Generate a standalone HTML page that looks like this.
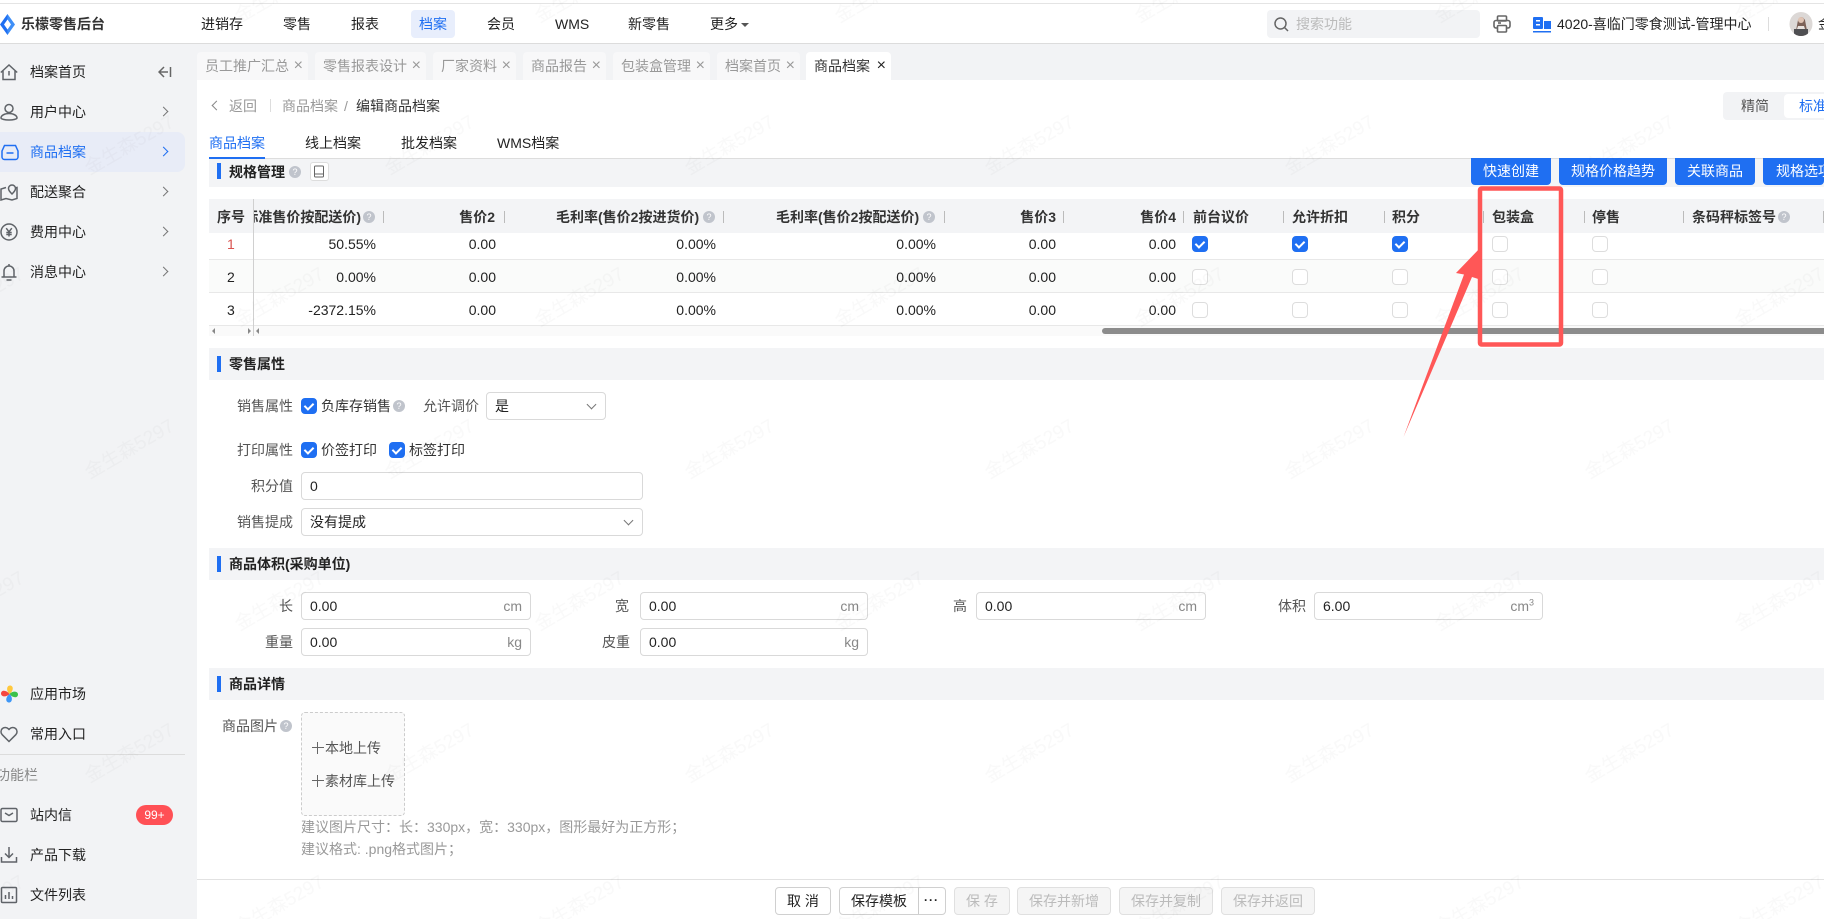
<!DOCTYPE html>
<html lang="zh"><head><meta charset="utf-8"><title>乐檬零售后台</title>
<style>
html,body{margin:0;padding:0;background:#fff}
#p{position:relative;width:1824px;height:919px;overflow:hidden;background:#fff;font:14px/20px "Liberation Sans","Noto Sans CJK SC",sans-serif;color:#222}
#p div,#p span.a,#p svg.a{position:absolute}
.t{white-space:nowrap}
.g{color:#555}.l{color:#999}.b{font-weight:bold}
.tab{top:52px;height:28px;background:#f8f8f9;border-radius:4px 4px 0 0;color:#999;line-height:28px;text-indent:8px;white-space:nowrap}
.x{position:absolute;right:5px;top:0;text-indent:0;font-size:16px}
.sec{left:209px;width:1615px;height:32px;background:#f3f4f6}
.bar{left:217px;width:4px;height:16px;background:#1f6ff2}
.sep{width:1px;height:12px;top:211px;background:#bbb}
.cb{width:14px;height:14px;border:1px solid #ddd;border-radius:4px;background:#fff}
.cb.on{background:#1f6ff2;border-color:#1f6ff2}
.cb.on::after{content:"";position:absolute;left:4px;top:2px;width:4px;height:7px;border:solid #fff;border-width:0 2px 2px 0;transform:rotate(45deg)}
.q{width:12px;height:12px;border-radius:50%;background:#c0c4cc;color:#fff;font-size:9px;line-height:12px;text-align:center}
.btn{top:158px;height:27px;background:#1f6ff2;color:#fff;text-align:center;line-height:26px;border-radius:0 0 4px 4px}
.in{height:26px;border:1px solid #d9d9d9;border-radius:4px;background:#fff;line-height:26px;text-indent:8px;white-space:nowrap}
.u{position:absolute;right:8px;top:0;color:#888;text-indent:0}
.f{top:887px;height:26px;line-height:26px;border:1px solid #d0d0d0;border-radius:4px;text-align:center;background:#fff;white-space:nowrap}
.d{background:#f5f5f5;border-color:#e0e0e0;color:#bbb}
.chev{width:6px;height:6px;border:solid #777;border-width:1.5px 1.5px 0 0;transform:rotate(45deg)}
.sv{width:18px;height:18px;fill:none;stroke:#5f6368;stroke-width:1.5}
.plus{position:relative;display:inline-block;width:12px;height:12px;margin-right:1px;vertical-align:-1px;background:linear-gradient(#666,#666) center/12px 1.2px no-repeat,linear-gradient(#666,#666) center/1.2px 12px no-repeat}
</style></head><body><div id="p">

<!-- top header -->
<div style="left:0;top:3px;width:1824px;height:1px;background:#e4e4e4"></div>
<div style="left:0;top:43px;width:1824px;height:1px;background:#dcdcdc"></div>
<svg class="a" style="left:0;top:14px" width="15" height="21" viewBox="0 0 15 21"><path d="M7.500 0L0 10.500 7.500 21V15.500L4 10.500 7.500 5.500z" fill="#1f6ff2"/><path d="M7.500 0L15 10.500 7.500 21V15.500L11 10.500 7.500 5.500z" fill="#3f8ff7"/></svg>
<div class="t b" style="left:21px;top:14px;color:#333">乐檬零售后台</div>
<div style="left:411px;top:10px;width:44px;height:28px;background:#e8eefc;border-radius:4px"></div>
<div class="t" style="left:201px;top:14px">进销存</div>
<div class="t" style="left:283px;top:14px">零售</div>
<div class="t" style="left:351px;top:14px">报表</div>
<div class="t" style="left:419px;top:14px;color:#1f6ff2">档案</div>
<div class="t" style="left:487px;top:14px">会员</div>
<div class="t" style="left:555px;top:14px">WMS</div>
<div class="t" style="left:628px;top:14px">新零售</div>
<div class="t" style="left:710px;top:14px">更多</div>
<div style="left:741px;top:23px;width:0;height:0;border:4px solid transparent;border-top:4px solid #555;border-bottom:0"></div>

<div style="left:1267px;top:10px;width:213px;height:28px;background:#f2f3f5;border-radius:4px"></div>
<svg class="a" style="left:1274px;top:17px" width="15" height="15" viewBox="0 0 15 15" fill="none" stroke="#666" stroke-width="1.5"><circle cx="6.500" cy="6.500" r="5.500"/><path d="M10.500 10.500l3.500 3.500"/></svg>
<div class="t" style="left:1296px;top:14px;color:#bbb">搜索功能</div>
<svg class="a" style="left:1493px;top:15px" width="18" height="18" viewBox="0 0 18 18" fill="none" stroke="#666" stroke-width="1.600"><rect x="4.500" y="1" width="9" height="5" rx="1"/><rect x="1" y="5.500" width="16" height="7.500" rx="2"/><rect x="4.500" y="10.500" width="9" height="6.500" rx="1" fill="#fff"/><path d="M5 8h3"/></svg>
<svg class="a" style="left:1533px;top:17px" width="18" height="16" viewBox="0 0 18 16"><rect x="0" y="0" width="10" height="12" rx="1" fill="#1f6ff2"/><rect x="11" y="4" width="7" height="8" fill="#1f6ff2"/><rect x="0" y="14" width="18" height="1.500" fill="#1f6ff2"/><rect x="3" y="3" width="4" height="1.500" fill="#fff"/><rect x="3" y="7" width="4" height="1.500" fill="#fff"/></svg>
<div class="t" style="left:1557px;top:14px">4020-喜临门零食测试-管理中心</div>
<div style="left:1768px;top:17px;width:1px;height:14px;background:#ddd"></div>
<svg class="a" style="left:1789px;top:12px" width="24" height="24" viewBox="0 0 24 24"><defs><clipPath id="av"><ellipse cx="12" cy="12" rx="11.500" ry="12"/></clipPath></defs><g clip-path="url(#av)"><rect width="24" height="24" fill="#dcd8d6"/><path d="M6 24L9 8q3-6 7 0l3 16z" fill="#7d6258"/><circle cx="12" cy="8" r="3" fill="#e0c4b4"/><rect x="5" y="17" width="14" height="7" fill="#4f4f52"/><path d="M9 14h6l1 3H8z" fill="#e8e2de"/></g></svg>
<div class="t" style="left:1818px;top:14px">金</div>

<!-- sidebar -->
<div style="left:0;top:44px;width:197px;height:875px;background:#f2f3f5"></div>
<div style="left:197px;top:44px;width:1627px;height:36px;background:#f2f3f5"></div>
<div style="left:0;top:132px;width:185px;height:40px;background:#e8ecf7;border-radius:0 8px 8px 0"></div>

<svg class="a sv" style="left:0;top:63px" viewBox="0 0 18 18"><path d="M.8 9.500L9 2l8.200 7.500M3 8v8.500h12V8M9 8v4.500"/></svg>
<div class="t" style="left:30px;top:62px">档案首页</div>
<svg class="a" style="left:158px;top:66px" width="14" height="12" viewBox="0 0 14 12" fill="none" stroke="#666" stroke-width="1.500"><path d="M6 1L1 6l5 5M1 6h9M12.500 1v10"/></svg>

<svg class="a sv" style="left:0;top:103px" viewBox="0 0 18 18"><circle cx="9" cy="5.500" r="4"/><path d="M1 15c0-2.500 3.500-4.500 8-4.500s8 2 8 4.500c0 1-3.500 2-8 2s-8-1-8-2z"/></svg>
<div class="t" style="left:30px;top:102px">用户中心</div>

<svg class="a sv" style="left:1px;top:143px;stroke:#1f6ff2" viewBox="0 0 18 18"><path d="M3.500 2.500h11L17 8v6a2.500 2.500 0 0 1-2.500 2.500h-11A2.500 2.500 0 0 1 1 14V8z"/><path d="M5.500 10h7"/></svg>
<div class="t" style="left:30px;top:142px;color:#1f6ff2">商品档案</div>

<svg class="a sv" style="left:0;top:183px" viewBox="0 0 18 18"><path d="M6 4.500L1 6v11l5-1.500 6 1.500 5-1.500V4.500l-2 .5"/><path d="M12 11c-2-2-3.500-3.500-3.500-5.500a3.500 3.500 0 0 1 7 0c0 2-1.500 3.500-3.500 5.500z"/></svg>
<div class="t" style="left:30px;top:182px">配送聚合</div>

<svg class="a sv" style="left:0;top:223px" viewBox="0 0 18 18"><circle cx="9" cy="9" r="8"/><path d="M6.200 5.200L9 8.800l2.800-3.600M9 8.800V13.500M6.300 9.500h5.400M6.300 11.500h5.400"/></svg>
<div class="t" style="left:30px;top:222px">费用中心</div>

<svg class="a sv" style="left:0;top:263px" viewBox="0 0 18 18"><path d="M4 13.500V8a5 5 0 0 1 10 0v5.500M1.500 14h15M6.500 17h5M9 1v2"/></svg>
<div class="t" style="left:30px;top:262px">消息中心</div>

<svg class="a" style="left:1px;top:685px" width="17" height="18" viewBox="0 0 17 18"><g id="pw"><path d="M8.500 9C5 6 5.500.5 9 .5S13 5.500 8.500 9z" fill="#ffc83d"/><path d="M8.500 9C5 6 5.500.5 9 .5S13 5.500 8.500 9z" fill="#3cc24a" transform="rotate(90 8.500 9)"/><path d="M8.500 9C5 6 5.500.5 9 .5S13 5.500 8.500 9z" fill="#3f97f6" transform="rotate(180 8.500 9)"/><path d="M8.500 9C5 6 5.500.5 9 .5S13 5.500 8.500 9z" fill="#f5473f" transform="rotate(270 8.500 9)"/></g></svg>
<div class="t" style="left:30px;top:684px">应用市场</div>

<svg class="a sv" style="left:0;top:725px" viewBox="0 0 18 18"><path d="M9 16.500L2.200 9.700a4.300 4.300 0 0 1 0-6 4.200 4.200 0 0 1 6 0l.8.8.8-.8a4.200 4.200 0 0 1 6 0 4.300 4.300 0 0 1 0 6z"/></svg>
<div class="t" style="left:30px;top:724px">常用入口</div>

<div style="left:0;top:754px;width:185px;height:1px;background:#dcdcdc"></div>
<div class="t" style="left:-4px;top:765px;color:#888">功能栏</div>

<svg class="a sv" style="left:0;top:806px" viewBox="0 0 18 18"><rect x="1" y="2.500" width="16" height="13" rx="1.500"/><path d="M5 7l4 2.500L13 7"/></svg>
<div class="t" style="left:30px;top:805px">站内信</div>
<div style="left:136px;top:805px;width:37px;height:20px;border-radius:10px;background:#ff5055;color:#fff;font-size:12px;text-align:center;line-height:20px">99+</div>

<svg class="a sv" style="left:0;top:846px" viewBox="0 0 18 18"><path d="M9 1v10M5 7.500l4 4 4-4M1.500 11v5h15v-5"/></svg>
<div class="t" style="left:30px;top:845px">产品下载</div>

<svg class="a sv" style="left:0;top:886px" viewBox="0 0 18 18"><rect x="1.500" y="1.500" width="15" height="15" rx="1"/><path d="M5.500 13V9M9 13V6M12.500 13v-3"/></svg>
<div class="t" style="left:30px;top:885px">文件列表</div>

<div class="chev" style="left:160px;top:108px"></div>
<div class="chev" style="left:160px;top:148px;border-color:#1f6ff2"></div>
<div class="chev" style="left:160px;top:188px"></div>
<div class="chev" style="left:160px;top:228px"></div>
<div class="chev" style="left:160px;top:268px"></div>

<!-- tabs -->
<div class="tab" style="left:197px;width:111px">员工推广汇总<span class="x">×</span></div>
<div class="tab" style="left:315px;width:111px">零售报表设计<span class="x">×</span></div>
<div class="tab" style="left:433px;width:83px">厂家资料<span class="x">×</span></div>
<div class="tab" style="left:523px;width:83px">商品报告<span class="x">×</span></div>
<div class="tab" style="left:613px;width:97px">包装盒管理<span class="x">×</span></div>
<div class="tab" style="left:717px;width:83px">档案首页<span class="x">×</span></div>
<div class="tab" style="left:806px;width:85px;background:#fff;color:#333">商品档案<span class="x" style="color:#222">×</span></div>

<!-- breadcrumb -->
<div style="left:213px;top:102px;width:6px;height:6px;border:solid #888;border-width:0 0 1.200px 1.200px;transform:rotate(45deg)"></div>
<div class="t l" style="left:229px;top:96px">返回</div>
<div style="left:270px;top:99px;width:1px;height:13px;background:#ddd"></div>
<div class="t l" style="left:282px;top:96px">商品档案</div>
<div class="t l" style="left:344px;top:96px">/</div>
<div class="t" style="left:356px;top:96px;color:#333">编辑商品档案</div>

<div style="left:1723px;top:92px;width:101px;height:28px;background:#f2f3f5;border-radius:4px 0 0 4px"></div>
<div class="t g" style="left:1741px;top:96px">精简</div>
<div style="left:1784px;top:94px;width:40px;height:24px;background:#fff;border-radius:4px 0 0 4px"></div>
<div class="t" style="left:1799px;top:96px;color:#1f6ff2">标准</div>

<!-- sub tabs -->
<div class="t" style="left:209px;top:133px;color:#1f6ff2">商品档案</div>
<div class="t" style="left:305px;top:133px">线上档案</div>
<div class="t" style="left:401px;top:133px">批发档案</div>
<div class="t" style="left:497px;top:133px">WMS档案</div>
<div style="left:209px;top:158px;width:1615px;height:1px;background:#ddd"></div>
<div style="left:209px;top:157px;width:56px;height:2px;background:#1f6ff2"></div>

<!-- 规格管理 -->
<div class="sec" style="top:159px;height:28px"></div>
<div class="bar" style="top:163px"></div>
<div class="t b" style="left:229px;top:162px;color:#222">规格管理</div>
<div class="q" style="left:289px;top:166px">?</div>
<div style="left:310px;top:162px;width:17px;height:17px;border:1px solid #ddd;border-radius:3px;background:#fff"></div>
<svg class="a" style="left:313px;top:165px" width="12" height="13" viewBox="0 0 12 13" fill="none" stroke="#666"><rect x="1.500" y="1" width="9" height="11" rx="1"/><path d="M1.500 9h9"/></svg>
<div class="btn" style="left:1471px;width:80px">快速创建</div>
<div class="btn" style="left:1559px;width:108px">规格价格趋势</div>
<div class="btn" style="left:1675px;width:80px">关联商品</div>
<div class="btn" style="left:1763px;width:61px;text-align:left;text-indent:13px;overflow:hidden;white-space:nowrap">规格选项</div>

<!-- table -->
<div style="left:209px;top:199px;width:1615px;height:34px;background:#f3f4f6"></div>
<div style="left:209px;top:259px;width:1615px;height:33px;background:#fafbfa"></div>
<div style="left:209px;top:325px;width:1615px;height:11px;background:#fafafa"></div>
<div style="left:209px;top:259px;width:1615px;height:1px;background:#e8e8e8"></div>
<div style="left:209px;top:292px;width:1615px;height:1px;background:#e8e8e8"></div>
<div style="left:209px;top:325px;width:1615px;height:1px;background:#e8e8e8"></div>
<div style="left:253px;top:199px;width:1px;height:137px;background:#d0d0d0"></div>

<div class="t b" style="left:217px;top:207px;color:#333">序号</div>
<div style="left:254px;top:207px;width:107px;height:20px;overflow:hidden"><div class="t b" style="right:0;top:0;color:#333">标准售价按配送价)</div></div>
<div class="q" style="left:363px;top:211px">?</div>
<div class="t b" style="right:1329px;top:207px;color:#333">售价2</div>
<div class="t b" style="left:556px;top:207px;color:#333">毛利率(售价2按进货价)</div>
<div class="q" style="left:703px;top:211px">?</div>
<div class="t b" style="left:776px;top:207px;color:#333">毛利率(售价2按配送价)</div>
<div class="q" style="left:923px;top:211px">?</div>
<div class="t b" style="right:768px;top:207px;color:#333">售价3</div>
<div class="t b" style="right:648px;top:207px;color:#333">售价4</div>
<div class="t b" style="left:1193px;top:207px;color:#333">前台议价</div>
<div class="t b" style="left:1292px;top:207px;color:#333">允许折扣</div>
<div class="t b" style="left:1392px;top:207px;color:#333">积分</div>
<div class="t b" style="left:1492px;top:207px;color:#333">包装盒</div>
<div class="t b" style="left:1592px;top:207px;color:#333">停售</div>
<div class="t b" style="left:1692px;top:207px;color:#333">条码秤标签号</div>
<div class="q" style="left:1778px;top:211px">?</div>
<div class="sep" style="left:383px"></div><div class="sep" style="left:504px"></div><div class="sep" style="left:723px"></div><div class="sep" style="left:944px"></div><div class="sep" style="left:1063px"></div><div class="sep" style="left:1183px"></div><div class="sep" style="left:1283px"></div><div class="sep" style="left:1384px"></div><div class="sep" style="left:1483px"></div><div class="sep" style="left:1584px"></div><div class="sep" style="left:1683px"></div><div class="sep" style="left:1823px"></div>

<div class="t" style="left:227px;top:234px;color:#d9534f">1</div>
<div class="t" style="left:227px;top:267px">2</div>
<div class="t" style="left:227px;top:300px">3</div>

<div class="t" style="right:1448px;top:234px">50.55%</div><div class="t" style="right:1328px;top:234px">0.00</div><div class="t" style="right:1108px;top:234px">0.00%</div><div class="t" style="right:888px;top:234px">0.00%</div><div class="t" style="right:768px;top:234px">0.00</div><div class="t" style="right:648px;top:234px">0.00</div>
<div class="t" style="right:1448px;top:267px">0.00%</div><div class="t" style="right:1328px;top:267px">0.00</div><div class="t" style="right:1108px;top:267px">0.00%</div><div class="t" style="right:888px;top:267px">0.00%</div><div class="t" style="right:768px;top:267px">0.00</div><div class="t" style="right:648px;top:267px">0.00</div>
<div class="t" style="right:1448px;top:300px">-2372.15%</div><div class="t" style="right:1328px;top:300px">0.00</div><div class="t" style="right:1108px;top:300px">0.00%</div><div class="t" style="right:888px;top:300px">0.00%</div><div class="t" style="right:768px;top:300px">0.00</div><div class="t" style="right:648px;top:300px">0.00</div>

<div class="cb on" style="left:1192px;top:236px"></div><div class="cb on" style="left:1292px;top:236px"></div><div class="cb on" style="left:1392px;top:236px"></div><div class="cb" style="left:1492px;top:236px"></div><div class="cb" style="left:1592px;top:236px"></div>
<div class="cb" style="left:1192px;top:269px"></div><div class="cb" style="left:1292px;top:269px"></div><div class="cb" style="left:1392px;top:269px"></div><div class="cb" style="left:1492px;top:269px"></div><div class="cb" style="left:1592px;top:269px"></div>
<div class="cb" style="left:1192px;top:302px"></div><div class="cb" style="left:1292px;top:302px"></div><div class="cb" style="left:1392px;top:302px"></div><div class="cb" style="left:1492px;top:302px"></div><div class="cb" style="left:1592px;top:302px"></div>

<svg class="a" style="left:211px;top:327px" width="50" height="8" viewBox="0 0 50 8" fill="#888"><path d="M1 4l3-3v6zM37 1l3 3-3 3zM48 1v6l-3-3z"/></svg>
<div style="left:1102px;top:328px;width:722px;height:6px;border-radius:3px 0 0 3px;background:#8c8c8c"></div>

<!-- 零售属性 -->
<div class="sec" style="top:348px"></div>
<div class="bar" style="top:356px"></div>
<div class="t b" style="left:229px;top:354px">零售属性</div>
<div class="t g" style="left:237px;top:396px">销售属性</div>
<div class="cb on" style="left:301px;top:398px"></div>
<div class="t" style="left:321px;top:396px;color:#333">负库存销售</div>
<div class="q" style="left:393px;top:400px">?</div>
<div class="t g" style="left:423px;top:396px">允许调价</div>
<div class="in" style="left:486px;top:392px;width:118px">是</div>
<div style="left:588px;top:401px;width:6px;height:6px;border:solid #777;border-width:0 1.500px 1.500px 0;transform:rotate(45deg)"></div>
<div class="t g" style="left:237px;top:440px">打印属性</div>
<div class="cb on" style="left:301px;top:442px"></div>
<div class="t" style="left:321px;top:440px;color:#333">价签打印</div>
<div class="cb on" style="left:389px;top:442px"></div>
<div class="t" style="left:409px;top:440px;color:#333">标签打印</div>
<div class="t g" style="left:251px;top:476px">积分值</div>
<div class="in" style="left:301px;top:472px;width:340px">0</div>
<div class="t g" style="left:237px;top:512px">销售提成</div>
<div class="in" style="left:301px;top:508px;width:340px">没有提成</div>
<div style="left:625px;top:517px;width:6px;height:6px;border:solid #777;border-width:0 1.500px 1.500px 0;transform:rotate(45deg)"></div>

<!-- 商品体积 -->
<div class="sec" style="top:548px"></div>
<div class="bar" style="top:556px"></div>
<div class="t b" style="left:229px;top:554px">商品体积(采购单位)</div>
<div class="t g" style="left:279px;top:596px">长</div>
<div class="in" style="left:301px;top:592px;width:228px">0.00<span class="u">cm</span></div>
<div class="t g" style="left:615px;top:596px">宽</div>
<div class="in" style="left:640px;top:592px;width:226px">0.00<span class="u">cm</span></div>
<div class="t g" style="left:953px;top:596px">高</div>
<div class="in" style="left:976px;top:592px;width:228px">0.00<span class="u">cm</span></div>
<div class="t g" style="left:1278px;top:596px">体积</div>
<div class="in" style="left:1314px;top:592px;width:227px">6.00<span class="u">cm<sup style="font-size:9px;line-height:0">3</sup></span></div>
<div class="t g" style="left:265px;top:632px">重量</div>
<div class="in" style="left:301px;top:628px;width:228px">0.00<span class="u">kg</span></div>
<div class="t g" style="left:602px;top:632px">皮重</div>
<div class="in" style="left:640px;top:628px;width:226px">0.00<span class="u">kg</span></div>

<!-- 商品详情 -->
<div class="sec" style="top:668px"></div>
<div class="bar" style="top:676px"></div>
<div class="t b" style="left:229px;top:674px">商品详情</div>
<div class="t g" style="left:222px;top:716px">商品图片</div>
<div class="q" style="left:280px;top:720px">?</div>
<div style="left:301px;top:712px;width:102px;height:102px;border:1px dashed #ccc;border-radius:4px;background:#fafafa"></div>
<div class="t g" style="left:312px;top:738px"><span class="plus"></span>本地上传</div>
<div class="t g" style="left:312px;top:771px"><span class="plus"></span>素材库上传</div>
<div class="t l" style="left:301px;top:817px">建议图片尺寸：长：330px，宽：330px，图形最好为正方形；</div>
<div class="t l" style="left:301px;top:839px">建议格式: .png格式图片；</div>

<!-- footer -->
<div style="left:197px;top:879px;width:1627px;height:1px;background:#e2e2e2"></div>
<div class="f" style="left:775px;width:54px">取 消</div>
<div class="f" style="left:839px;width:105px;text-align:left;text-indent:11px">保存模板</div>
<div style="left:918px;top:888px;width:1px;height:26px;background:#ccc"></div>
<div class="t" style="left:924px;top:892px;font-weight:bold;letter-spacing:1px;font-size:12px;line-height:16px">···</div>
<div class="f d" style="left:954px;width:54px">保 存</div>
<div class="f d" style="left:1017px;width:92px">保存并新增</div>
<div class="f d" style="left:1119px;width:92px">保存并复制</div>
<div class="f d" style="left:1221px;width:92px">保存并返回</div>

<!-- watermark -->
<svg class="a" style="left:0;top:0;pointer-events:none" width="1824" height="919">
<defs><pattern id="wm" patternUnits="userSpaceOnUse" x="55" y="70" width="300" height="304">
<text x="75" y="76" transform="rotate(-30 75 76)" text-anchor="middle" dominant-baseline="middle" font-size="19" fill="#000" fill-opacity=".022" font-family="Liberation Sans, Noto Sans CJK SC, sans-serif">金生森5297</text>
<text x="225" y="228" transform="rotate(-30 225 228)" text-anchor="middle" dominant-baseline="middle" font-size="19" fill="#000" fill-opacity=".022" font-family="Liberation Sans, Noto Sans CJK SC, sans-serif">金生森5297</text>
</pattern></defs>
<rect width="1824" height="919" fill="url(#wm)"/>
</svg>

<!-- red annotation -->
<svg class="a" style="left:0;top:0" width="1824" height="919">
<rect x="1480" y="188.500" width="81" height="156" rx="1.500" fill="none" stroke="#ff5757" stroke-width="4.500"/>
<path d="M1403.500 437L1464 274.500 1456 273 1481 247 1481.500 280 1472 277z" fill="#ff5757"/>
</svg>
</div></body></html>
